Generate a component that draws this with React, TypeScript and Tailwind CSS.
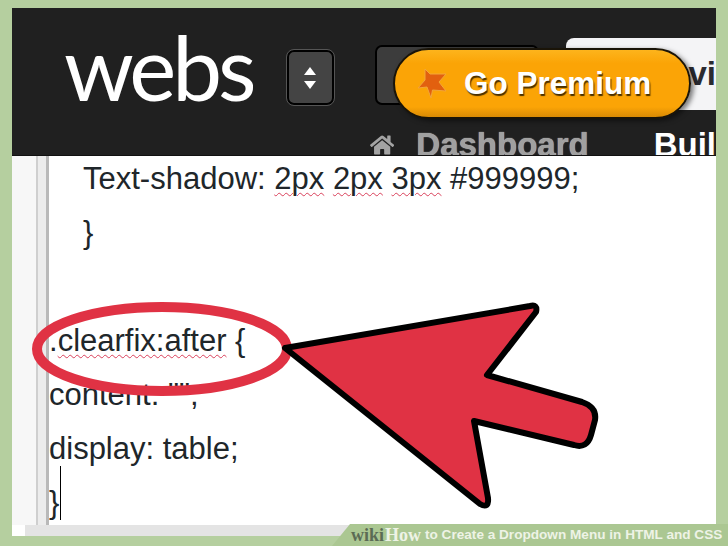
import { FaHome } from "react-icons/fa";

const sans = "font-['Liberation_Sans',Arial,sans-serif]";

function Misspelt({ children }: { children: string }) {
  return (
    <span className="underline decoration-wavy decoration-[#d9405a] decoration-1 underline-offset-[3px]">
      {children}
    </span>
  );
}

function Header() {
  return (
    <header className={`relative z-10 h-[148px] shrink-0 overflow-hidden border-b border-[#111] bg-[#202020] ${sans}`}>
      <div className="flex h-[118px] items-start">
        <span className="mt-[11px] ml-[52px] w-[209px] font-['Lato',sans-serif] text-[89px] leading-[96px] font-normal tracking-[-4px] text-white">
          webs
        </span>
        <button className="mt-[42px] ml-[14px] flex h-[55px] w-[47px] items-center justify-center rounded-[7px] border-2 border-black bg-[#444] outline-1 outline-[#555]">
          <svg width="14" height="24" viewBox="0 0 14 24" fill="#fff">
            <path d="M7 1 L13 9 H1 Z" />
            <path d="M7 23 L13 15 H1 Z" />
          </svg>
        </button>
        <div className="mt-[37px] ml-[41px] h-[60px] w-[165px] rounded-[7px] border-2 border-black bg-[#3c3c3c]" />
        <div className="mt-[30px] ml-[27px] flex h-[72px] flex-1 items-center justify-start rounded-l-[8px] bg-[#f4f4f6] pl-[122px] text-[33px] font-bold text-[#2a2a30]">
          vi
        </div>
      </div>
      <nav className="flex items-center text-[33px] leading-[38px] font-bold">
        <FaHome className="ml-[358px] text-[#a3a3a3]" size={28} />
        <span className="ml-[22px] text-[#a0a0a0] [text-shadow:0_0_1px_#ddd]">Dashboard</span>
        <span className="ml-[65px] text-white">Buil</span>
      </nav>
    </header>
  );
}

function Code() {
  return (
    <div className={`relative -mt-[4px] flex-1 overflow-hidden bg-white text-[31px] leading-[54px] whitespace-pre text-[#20262a] ${sans}`}>
      <div className="pl-[34px]">
        Text-shadow: <Misspelt>2px</Misspelt> <Misspelt>2px</Misspelt> <Misspelt>3px</Misspelt> #999999;
      </div>
      <div className="pl-[34px]">{"}"}</div>
      <div className="h-[54px]" />
      <div>
        .<Misspelt>clearfix:after</Misspelt> {"{"}
      </div>
      <div>content: "";</div>
      <div>display: table;</div>
      <div className="flex">
        {"}"}
        <span className="-mt-[10px] ml-[1px] h-[54px] w-px bg-black" />
      </div>
    </div>
  );
}

function Editor() {
  return (
    <div className="flex min-h-0 flex-1">
      <div className="w-[24px] shrink-0 bg-[#f7f7f7]" />
      <div className="w-[2px] shrink-0 bg-[#cfcfcf]" />
      <div className="w-[8px] shrink-0 bg-[#ececec]" />
      <div className="w-[3px] shrink-0 bg-[#b9b9b9]" />
      <Code />
    </div>
  );
}

function PremiumButton() {
  return (
    <div className={`absolute top-[48px] left-[393px] z-20 flex h-[71px] w-[298px] items-center rounded-full border-2 border-[#1a1408] bg-[linear-gradient(#fdb41c,#fba406_20%,#fba406_85%,#d98a04)] pl-[22px] shadow-[3px_2px_5px_rgba(0,0,0,0.5)] ${sans}`}>
      <svg width="32" height="32" viewBox="0 0 32 32">
        <path
          d="M8 1 L13 6 L29 6 L22 14 L29 23 L15.5 22 L14 30 L10 19 L1 20 L8 12 Z"
          fill="#e2600f"
          stroke="#f2a63a"
          strokeWidth="1"
          strokeLinejoin="round"
        />
      </svg>
      <span className="ml-[15px] text-[31.5px] font-bold text-white [text-shadow:1px_2px_1px_#4a3000]">
        Go Premium
      </span>
    </div>
  );
}

function Annotation() {
  return (
    <svg className="absolute top-0 left-0 z-20" width="728" height="546" viewBox="0 0 728 546" fill="none">
      <ellipse cx="162" cy="349" rx="125" ry="42" stroke="#e03244" strokeWidth="10" />
      <path
        d="M285 348 L530 306 Q538 304 536 312 L487 375 L582 402 Q597 407 595 420 L591 435 Q587 449 574 445 L474 421 L488 498 Q489 509 480 504 Z"
        fill="#e03244"
        stroke="#000"
        strokeWidth="6"
        strokeLinejoin="round"
      />
    </svg>
  );
}

function WikiTab() {
  return (
    <div className="absolute right-0 bottom-0 z-30 flex h-[22px] w-[396px] items-center bg-[#abc792] pl-[19px] whitespace-nowrap [clip-path:polygon(18px_0,100%_0,100%_100%,0_100%)]">
      <span className="font-['Liberation_Serif',serif] text-[18px] font-bold text-[#5b6b55]">wiki</span>
      <span className="ml-[1px] font-['Liberation_Serif',serif] text-[18px] font-bold text-[#eef3e6]">How</span>
      <span className={`ml-[4px] text-[13.6px] font-bold text-[#eef3e6] ${sans}`}>
        to Create a Dropdown Menu in HTML and CSS
      </span>
    </div>
  );
}

export default function App() {
  return (
    <div className="relative h-[546px] w-[728px] overflow-hidden bg-[#b5cf9f] pt-[8px] pr-[12px] pb-[10px] pl-[12px]">
      <div className="flex h-full flex-col bg-white">
        <Header />
        <Editor />
        <div className="ml-[13px] h-[11px] shrink-0 bg-[#e4e4e4]" />
      </div>
      <PremiumButton />
      <Annotation />
      <WikiTab />
    </div>
  );
}
